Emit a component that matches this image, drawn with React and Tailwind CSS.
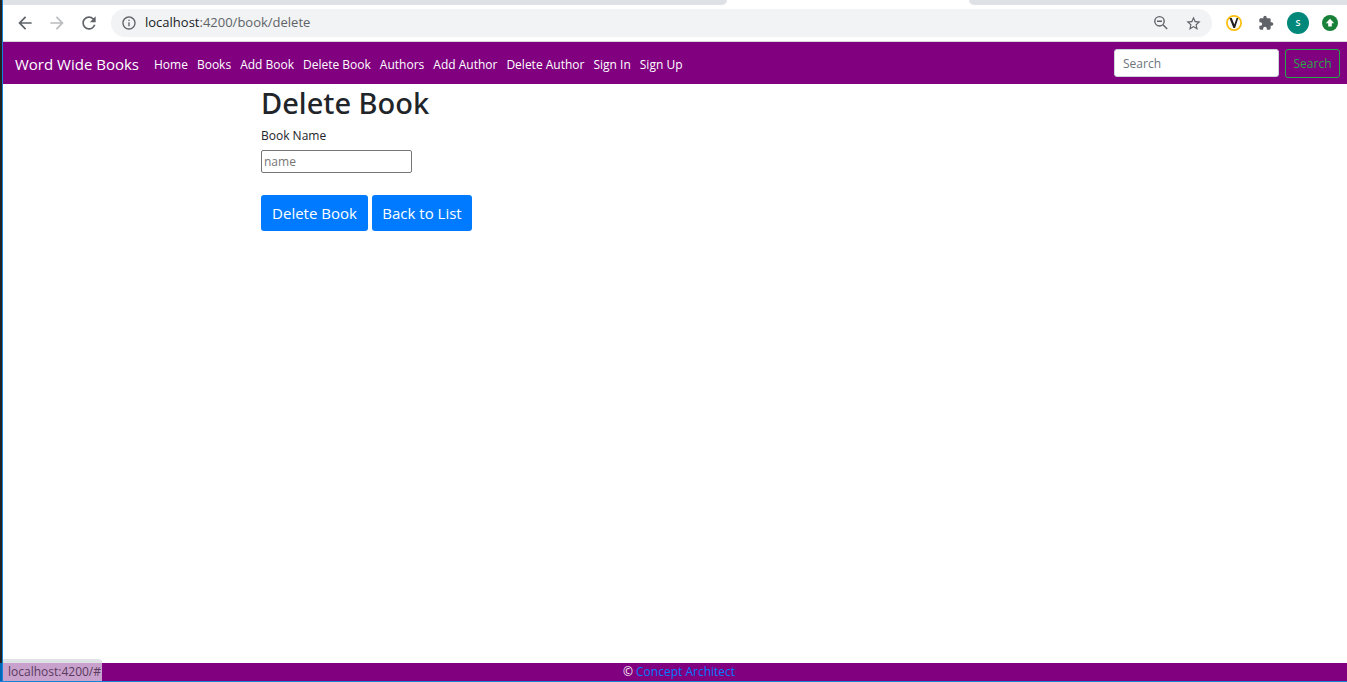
import React from "react";
import {
  MdArrowBack,
  MdArrowForward,
  MdRefresh,
  MdInfoOutline,
  MdStarBorder,
  MdExtension,
} from "react-icons/md";

const links = [
  "Home",
  "Books",
  "Add Book",
  "Delete Book",
  "Authors",
  "Add Author",
  "Delete Author",
  "Sign In",
  "Sign Up",
];

function ZoomOutIcon() {
  return (
    <svg viewBox="0 0 16 16" className="size-4" fill="none" stroke="#5f6368" strokeWidth="1.4">
      <circle cx="6.5" cy="6.3" r="4.7" />
      <path d="M4 6.3h5M10 9.8l4.2 4.2" />
    </svg>
  );
}

function VExtensionIcon() {
  return (
    <svg viewBox="0 0 16 16" className="size-4">
      <circle cx="8" cy="8" r="7.1" fill="#fff" stroke="#fdc010" strokeWidth="1.8" />
      <path d="M3.4 3h2.4l2.5 6.6L10.6 3h1.7L9.1 13H7.4z" fill="#222" />
    </svg>
  );
}

function UpdateIcon() {
  return (
    <svg viewBox="0 0 16 16" className="size-4">
      <circle cx="8" cy="8" r="8" fill="#188038" />
      <path d="M8 3.8l4.2 4.4H9.8v3.4H6.2V8.2H3.8z" fill="#fff" />
    </svg>
  );
}

function BrowserBar() {
  return (
    <header className="border-b border-[#d5d7da] bg-white">
      <div className="flex h-[5px]">
        <div className="w-[53.9%] rounded-br-lg bg-[#dee1e6]" />
        <div className="w-[18%]" />
        <div className="flex-1 rounded-bl-lg bg-[#dee1e6]" />
      </div>
      <div className="flex h-9 items-center pr-[9px] pl-3">
        <div className="flex items-center gap-3 pr-3 text-xl text-[#5f6368]">
          <button aria-label="Back"><MdArrowBack /></button>
          <button aria-label="Forward" className="text-[#babcbe]"><MdArrowForward /></button>
          <button aria-label="Reload"><MdRefresh /></button>
        </div>
        <div className="flex h-7 flex-1 items-center rounded-full bg-[#f1f3f4] px-2.5 text-[#5f6368]">
          <MdInfoOutline className="size-4" />
          <p className="flex-1 pl-2 text-[13px]">
            <span className="text-[#202124]">localhost</span>:4200/book/delete
          </p>
          <div className="flex items-center gap-4">
            <button aria-label="Zoom"><ZoomOutIcon /></button>
            <button aria-label="Bookmark this page"><MdStarBorder className="size-[17px]" /></button>
          </div>
        </div>
        <div className="flex items-center pl-3.5">
          <button aria-label="Security extension"><VExtensionIcon /></button>
          <button aria-label="Extensions" className="pr-[13px] pl-4 text-[#5f6368]"><MdExtension className="size-4" /></button>
          <button aria-label="Profile" className="mr-[13px] size-[22px] rounded-full bg-[#00897b] text-[9px] font-semibold text-white">
            S
          </button>
          <button aria-label="Update browser"><UpdateIcon /></button>
        </div>
      </div>
    </header>
  );
}

function NavBar() {
  return (
    <nav className="flex items-center bg-[purple] pt-[7px] pr-[7px] pb-1.5 pl-3 text-xs text-white">
      <a href="#" className="mr-[15px] text-[15px] leading-5">Word Wide Books</a>
      <ul className="flex flex-1 items-center gap-[9px] pt-0.5">
        {links.map((l) => (
          <li key={l}><a href="#">{l}</a></li>
        ))}
      </ul>
      <form className="flex items-start gap-1.5" onSubmit={(e) => e.preventDefault()}>
        <input
          type="search"
          aria-label="Search"
          placeholder="Search"
          className="h-7 w-[165px] rounded-[3px] border border-[#ced4da] bg-white px-2 text-[#495057] placeholder:text-[#6c757d]"
        />
        <button className="h-[29px] w-[55px] rounded-[3px] border border-[#28a745] text-[#28a745]">Search</button>
      </form>
    </nav>
  );
}

export default function App() {
  return (
    <div className="flex min-h-screen border-b border-[#1683d8] bg-white font-['Open_Sans','Noto_Sans',sans-serif]">
      <div className="flex w-[3px] flex-col border-r border-[#1683d8] bg-[#222]">
        <div className="mt-auto h-[18px] bg-[#0067b8]" />
      </div>
      <div className="flex min-w-0 flex-1 flex-col">
        <BrowserBar />
        <NavBar />
        <main className="flex-1 pl-[258px] text-[#212529]">
          <h1 className="font-['Noto_Sans',sans-serif] text-[29px] leading-[38px] font-medium">Delete Book</h1>
          <form onSubmit={(e) => e.preventDefault()}>
            <label htmlFor="book-name" className="block pt-1 text-xs leading-5">Book Name</label>
            <input
              id="book-name"
              placeholder="name"
              className="mt-1 block h-[23px] w-[151px] rounded-xs border border-[#767676] px-0.5 text-xs placeholder:text-[#757575]"
            />
            <div className="mt-[22px] flex gap-1 text-[15px] text-white">
              <button className="h-9 w-[107px] rounded-[3px] bg-[#007bff]">Delete Book</button>
              <button className="h-9 w-[100px] rounded-[3px] bg-[#007bff]">Back to List</button>
            </div>
          </form>
        </main>
        <footer className="relative bg-[purple] pl-2 text-center text-xs leading-[18px] text-white">
          © <a href="#" className="text-[#007bff]">Concept Architect</a>
          <div className="absolute bottom-0 left-0 rounded-tr border-t-4 border-[#dee1e6] bg-[#c8a2cc] pr-px pl-[5px] text-[#5a3a60]">
            localhost:4200/#
          </div>
        </footer>
      </div>
    </div>
  );
}
